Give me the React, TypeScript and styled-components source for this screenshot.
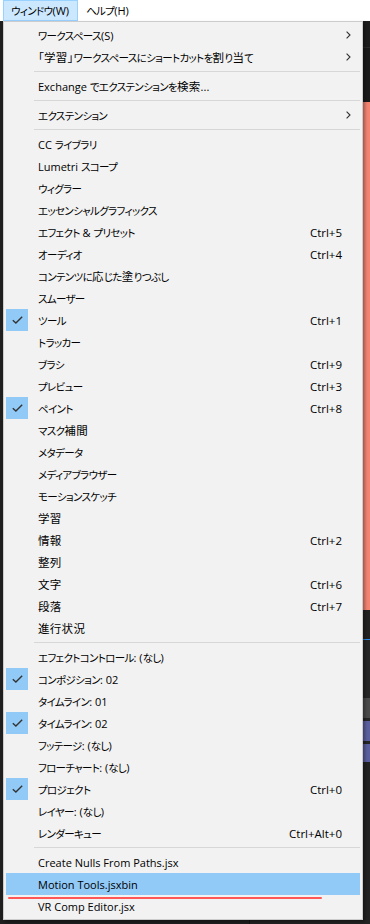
import styled, { createGlobalStyle } from 'styled-components';

const GlobalStyle = createGlobalStyle`
  html, body {
    margin: 0;
    padding: 0;
    background: #1e1e1e;
  }
  * {
    box-sizing: border-box;
  }
`;

const Screen = styled.div`
  position: relative;
  width: 370px;
  height: 924px;
  overflow: hidden;
  display: flex;
  flex-direction: column;
  font-family: "Open Sans", "Noto Sans CJK JP", sans-serif;
  font-size: 11px;
  color: #000;
`;

const MenuBar = styled.div`
  height: 21px;
  flex: none;
  background: #ffffff;
  display: flex;
  align-items: stretch;
  padding-left: 3px;
`;

const MenuBarItem = styled.div<{ $active?: boolean }>`
  display: flex;
  align-items: center;
  padding: 0 8px 0 7px;
  background: ${(p) => (p.$active ? '#cce8ff' : 'transparent')};
  border: 1px solid ${(p) => (p.$active ? '#99d1ff' : 'transparent')};
`;

const Workspace = styled.div`
  flex: 1;
  display: flex;
  background: #1e1e1e;
`;

const LeftPanel = styled.div`
  flex: 1;
  background: #1f1f1f;
  border-right: 1px solid #151515;
`;

const RightPanel = styled.div`
  width: 120px;
  display: flex;
  flex-direction: column;
`;

const Band = styled.div<{ $h: number; $bg: string; $line?: string }>`
  height: ${(p) => p.$h}px;
  flex: none;
  background: ${(p) => p.$bg};
  border-bottom: ${(p) => (p.$line ? `1px solid ${p.$line}` : 'none')};
`;

const DropMenu = styled.div`
  position: absolute;
  top: 21px;
  left: 3px;
  width: 360px;
  background: #f2f2f2;
  border: 1px solid #cccccc;
  padding: 2px;
  box-shadow: 2px 2px 3px rgba(0, 0, 0, 0.35);
  display: flex;
  flex-direction: column;
`;

const Row = styled.div<{ $hot?: boolean }>`
  height: 22px;
  display: grid;
  grid-template-columns: 22px 1fr auto 18px;
  align-items: center;
  background: ${(p) => (p.$hot ? '#91c9f7' : 'transparent')};
`;

const CheckCell = styled.div<{ $on?: boolean }>`
  width: 22px;
  height: 22px;
  display: flex;
  align-items: center;
  justify-content: center;
  background: ${(p) => (p.$on ? '#91c9f7' : 'transparent')};
`;

const Label = styled.span`
  padding-left: 10px;
  white-space: nowrap;
`;

const Shortcut = styled.span`
  white-space: nowrap;
  font-size: 11.5px;
`;

// Yu Gothic UI look: small, narrow proportional kana next to full-size kanji
const Run = styled.span<{ $kind: 'kana' | 'cjk' | 'latin' }>`
  font-family: ${(p) => (p.$kind === 'latin' ? '"Open Sans", sans-serif' : '"Noto Sans CJK JP", sans-serif')};
  font-feature-settings: ${(p) => (p.$kind === 'latin' ? 'normal' : '"palt"')};
  font-size: ${(p) => (p.$kind === 'kana' ? '10.5px' : p.$kind === 'cjk' ? '11.5px' : '11px')};
  font-weight: 400;
  letter-spacing: ${(p) => (p.$kind === 'kana' ? '-0.65px' : p.$kind === 'cjk' ? '0.3px' : '0')};
`;

const ArrowCell = styled.div`
  display: flex;
  align-items: center;
  justify-content: flex-end;
  padding-right: 9px;
`;

const Separator = styled.div`
  height: 7px;
  display: flex;
  align-items: center;
  padding-left: 28px;
  &::after {
    content: '';
    flex: 1;
    height: 1px;
    background: #d7d7d7;
  }
`;

const Underline = styled.div`
  position: absolute;
  left: 8px;
  top: 897px;
  width: 314px;
  height: 2px;
  border-radius: 1px;
  background: #ff5757;
`;

const kindOf = (ch: string): 'kana' | 'cjk' | 'latin' => {
  if (/[\u3040-\u30ff\u31f0-\u31ff]/.test(ch)) return 'kana';
  if (/[\u3000-\u303f\u4e00-\u9fff\uff00-\uffef]/.test(ch)) return 'cjk';
  return 'latin';
};

const Txt = ({ text }: { text: string }) => {
  const runs: { kind: 'kana' | 'cjk' | 'latin'; s: string }[] = [];
  for (const ch of text) {
    const k = kindOf(ch);
    const last = runs[runs.length - 1];
    if (last && last.kind === k) last.s += ch;
    else runs.push({ kind: k, s: ch });
  }
  return (
    <>
      {runs.map((r, i) => (
        <Run key={i} $kind={r.kind}>
          {r.s}
        </Run>
      ))}
    </>
  );
};

const Check = () => (
  <svg width="11" height="8" viewBox="0 0 11 8">
    <path d="M0.8 4.2 L3.9 7 L10.2 0.8" fill="none" stroke="#333" strokeWidth="1.4" />
  </svg>
);

const Chevron = () => (
  <svg width="5" height="8" viewBox="0 0 5 8">
    <path d="M0.6 0.6 L4 4 L0.6 7.4" fill="none" stroke="#333" strokeWidth="1.1" />
  </svg>
);

type Item = { label: string; key?: string; checked?: boolean; sub?: boolean; hot?: boolean } | 'sep';

const items: Item[] = [
  { label: 'ワークスペース(S)', sub: true },
  { label: '「学習」ワークスペースにショートカットを割り当て', sub: true },
  'sep',
  { label: 'Exchange でエクステンションを検索...' },
  'sep',
  { label: 'エクステンション', sub: true },
  'sep',
  { label: 'CC ライブラリ' },
  { label: 'Lumetri スコープ' },
  { label: 'ウィグラー' },
  { label: 'エッセンシャルグラフィックス' },
  { label: 'エフェクト & プリセット', key: 'Ctrl+5' },
  { label: 'オーディオ', key: 'Ctrl+4' },
  { label: 'コンテンツに応じた塗りつぶし' },
  { label: 'スムーザー' },
  { label: 'ツール', key: 'Ctrl+1', checked: true },
  { label: 'トラッカー' },
  { label: 'ブラシ', key: 'Ctrl+9' },
  { label: 'プレビュー', key: 'Ctrl+3' },
  { label: 'ペイント', key: 'Ctrl+8', checked: true },
  { label: 'マスク補間' },
  { label: 'メタデータ' },
  { label: 'メディアブラウザー' },
  { label: 'モーションスケッチ' },
  { label: '学習' },
  { label: '情報', key: 'Ctrl+2' },
  { label: '整列' },
  { label: '文字', key: 'Ctrl+6' },
  { label: '段落', key: 'Ctrl+7' },
  { label: '進行状況' },
  'sep',
  { label: 'エフェクトコントロール: (なし)' },
  { label: 'コンポジション: 02', checked: true },
  { label: 'タイムライン: 01' },
  { label: 'タイムライン: 02', checked: true },
  { label: 'フッテージ: (なし)' },
  { label: 'フローチャート: (なし)' },
  { label: 'プロジェクト', key: 'Ctrl+0', checked: true },
  { label: 'レイヤー: (なし)' },
  { label: 'レンダーキュー', key: 'Ctrl+Alt+0' },
  'sep',
  { label: 'Create Nulls From Paths.jsx' },
  { label: 'Motion Tools.jsxbin', hot: true },
  { label: 'VR Comp Editor.jsx' },
];

export default function App() {
  return (
    <>
      <GlobalStyle />
      <Screen>
        <MenuBar>
          <MenuBarItem $active>
            <Txt text="ウィンドウ(W)" />
          </MenuBarItem>
          <MenuBarItem>
            <Txt text="ヘルプ(H)" />
          </MenuBarItem>
        </MenuBar>
        <Workspace>
          <LeftPanel />
          <RightPanel>
            <Band $h={27} $bg="#1d1d1d" $line="#2c2c2c" />
            <Band $h={54} $bg="#1b1b1b" />
            <Band $h={508} $bg="#f38472" />
            <Band $h={30} $bg="#232323" $line="#2d8ceb" />
            <Band $h={58} $bg="#262626" />
            <Band $h={20} $bg="#4a4a4a" />
            <Band $h={3} $bg="#262626" />
            <Band $h={20} $bg="#5b5f9e" />
            <Band $h={3} $bg="#262626" />
            <Band $h={18} $bg="#5b5f9e" />
            <Band $h={200} $bg="#232323" />
          </RightPanel>
        </Workspace>
        <DropMenu>
          {items.map((it, i) =>
            it === 'sep' ? (
              <Separator key={i} />
            ) : (
              <Row key={i} $hot={it.hot}>
                <CheckCell $on={it.checked}>{it.checked && <Check />}</CheckCell>
                <Label>
                  <Txt text={it.label} />
                </Label>
                <Shortcut>{it.key}</Shortcut>
                <ArrowCell>{it.sub && <Chevron />}</ArrowCell>
              </Row>
            )
          )}
        </DropMenu>
        <Underline />
      </Screen>
    </>
  );
}
